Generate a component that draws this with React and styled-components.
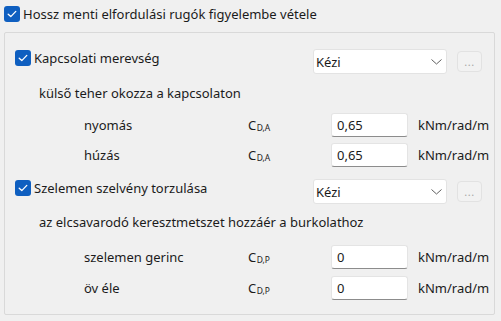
import React from "react";
import styled, { createGlobalStyle } from "styled-components";

const Global = createGlobalStyle`
  html, body { margin: 0; padding: 0; background: #f0f0f0; }
  body {
    font-family: "Noto Sans", "Segoe UI", sans-serif;
    font-size: 13px;
    color: #1b1b1b;
  }
`;

const Page = styled.div`
  width: 501px;
  height: 321px;
  box-sizing: border-box;
  padding: 6px 6px 0 4px;
  background: #f0f0f0;
`;

const CheckRow = styled.label`
  display: flex;
  align-items: center;
  gap: 3px;
  height: 16px;
  line-height: 16px;
  white-space: nowrap;
  margin-top: ${(p) => p.$mt || 0}px;
`;

const Box = styled.span`
  flex: none;
  width: 16px;
  height: 16px;
  border-radius: 3px;
  background: #0f5fc0;
  display: inline-flex;
  align-items: center;
  justify-content: center;
`;

const Check = () => (
  <Box>
    <svg width="10" height="8" viewBox="0 0 10 8">
      <path d="M1.2 4.2 L3.8 6.6 L8.8 1.4" fill="none" stroke="#fff" strokeWidth="1.3" strokeLinecap="round" strokeLinejoin="round" />
    </svg>
  </Box>
);

const GroupBox = styled.div`
  margin-top: 10px;
  width: 491px;
  box-sizing: border-box;
  border: 1px solid #d9d9d9;
  border-radius: 2px;
  padding: 16px 12px 14px 10px;
`;

const Section = styled.div`
  margin-top: ${(p) => p.$mt || 0}px;
`;

const Header = styled.div`
  display: flex;
  align-items: flex-start;
  height: 25px;
`;

const Spacer = styled.div`
  flex: 1;
`;

const Select = styled.div`
  width: 134px;
  height: 25px;
  box-sizing: border-box;
  background: #fff;
  border: 1px solid #e3e3e3;
  border-radius: 3px;
  display: flex;
  align-items: center;
  justify-content: space-between;
  padding: 0 4px 0 2px;
  color: #1b1b1b;
`;

const Ellipsis = styled.div`
  margin-left: 10px;
  margin-top: 2px;
  width: 25px;
  height: 21px;
  box-sizing: border-box;
  border: 1px solid #e2e2e2;
  border-radius: 4px;
  background: #f2f2f2;
  color: #a8a8a8;
  font-size: 11px;
  line-height: 19px;
  text-align: center;
  letter-spacing: 0.5px;
`;

const Desc = styled.div`
  margin-top: ${(p) => p.$mt}px;
  padding-left: 24px;
  height: 16px;
  line-height: 16px;
  white-space: nowrap;
`;

const Params = styled.div`
  margin-top: ${(p) => p.$mt}px;
  padding-left: 69px;
  display: grid;
  grid-template-columns: 164px 83px 77px auto;
  grid-auto-rows: 24px;
  row-gap: ${(p) => p.$gap}px;
  align-items: center;
`;

const Label = styled.div`
  white-space: nowrap;
`;

const Symbol = styled.div`
  white-space: nowrap;
  color: #1b1b1b;
`;

const Sub = styled.span`
  font-size: 8.5px;
  vertical-align: -1px;
  margin-left: 0.5px;
`;

const Input = styled.div`
  height: 24px;
  box-sizing: border-box;
  background: #fff;
  border: 1px solid #e4e4e4;
  border-bottom: 1px solid #8c8c8c;
  border-radius: 3px;
  padding-left: 5px;
  line-height: 22px;
`;

const Unit = styled.div`
  margin-left: 10px;
  white-space: nowrap;
`;

const Chevron = () => (
  <svg width="11" height="6" viewBox="0 0 11 6">
    <path d="M0.5 0.5 L5.5 5 L10.5 0.5" fill="none" stroke="#5f5f5f" strokeWidth="1" />
  </svg>
);

const ParamRows = ({ rows, sym, sub, mt, gap }) => (
  <Params $mt={mt} $gap={gap}>
    {rows.map(([label, value]) => (
      <React.Fragment key={label}>
        <Label>{label}</Label>
        <Symbol>
          {sym}
          <Sub>{sub}</Sub>
        </Symbol>
        <Input>{value}</Input>
        <Unit>kNm/rad/m</Unit>
      </React.Fragment>
    ))}
  </Params>
);

const SectionHeader = ({ label }) => (
  <Header>
    <CheckRow $mt={1}>
      <Check />
      {label}
    </CheckRow>
    <Spacer />
    <Select>
      Kézi
      <Chevron />
    </Select>
    <Ellipsis>...</Ellipsis>
  </Header>
);

export default function App() {
  return (
    <Page>
      <Global />
      <CheckRow>
        <Check />
        Hossz menti elfordulási rugók figyelembe vétele
      </CheckRow>
      <GroupBox>
        <Section>
          <SectionHeader label="Kapcsolati merevség" />
          <Desc $mt={11}>külső teher okozza a kapcsolaton</Desc>
          <ParamRows
            mt={12}
            gap={6}
            sym="C"
            sub="D,A"
            rows={[["nyomás", "0,65"], ["húzás", "0,65"]]}
          />
        </Section>
        <Section $mt={12}>
          <SectionHeader label="Szelemen szelvény torzulása" />
          <Desc $mt={10}>az elcsavarodó keresztmetszet hozzáér a burkolathoz</Desc>
          <ParamRows
            mt={15}
            gap={7}
            sym="C"
            sub="D,P"
            rows={[["szelemen gerinc", "0"], ["öv éle", "0"]]}
          />
        </Section>
      </GroupBox>
    </Page>
  );
}
